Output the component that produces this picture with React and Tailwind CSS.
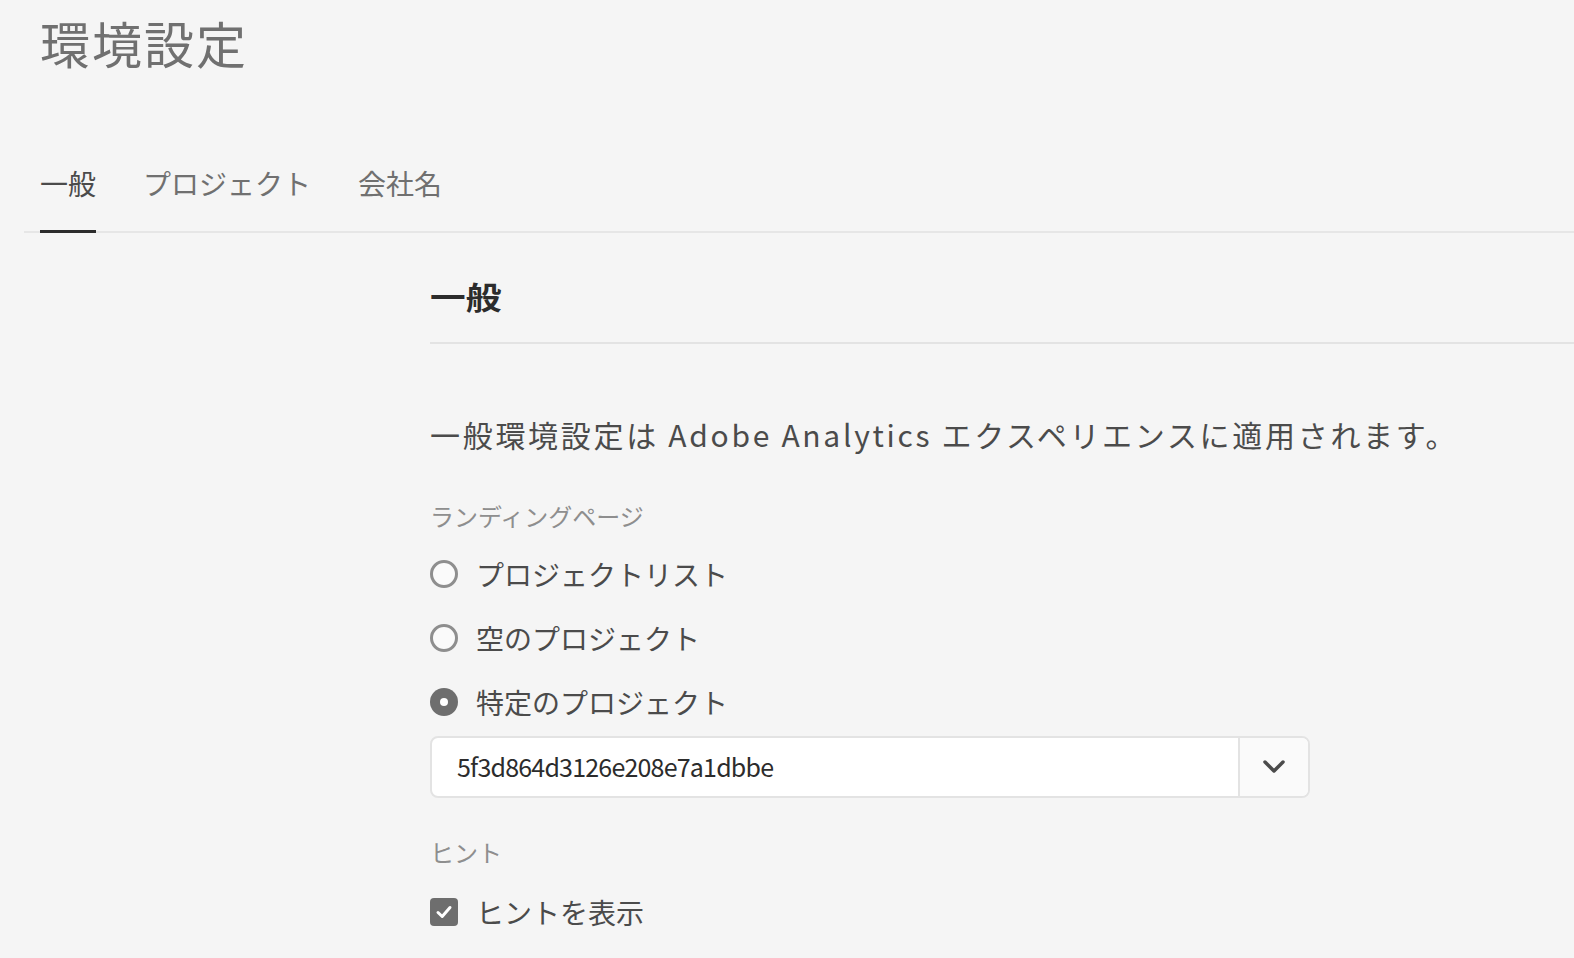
import { useState } from "react";

const font = "font-['Noto_Sans_CJK_JP','Noto_Sans',sans-serif]";

function Radio({ checked, label, onClick }) {
  return (
    <button type="button" onClick={onClick} className="flex h-[64px] items-center gap-[18px] text-left">
      {checked ? (
        <span className="flex size-[28px] items-center justify-center rounded-full bg-[#6e6e6e]">
          <span className="size-[8px] rounded-full bg-white" />
        </span>
      ) : (
        <span className="size-[28px] rounded-full border-[3px] border-[#8e8e8e] bg-[#fafafa]" />
      )}
      <span className="text-[28px] leading-[28px] text-[#4b4b4b]">{label}</span>
    </button>
  );
}

export default function App() {
  const [landing, setLanding] = useState("specific");
  const [tips, setTips] = useState(true);
  const tabs = ["一般", "プロジェクト", "会社名"];

  return (
    <div className={`min-h-screen bg-[#f5f5f5] ${font}`}>
      <h1 className="pl-[40px] pt-[17px] text-[50px] leading-[50px] font-normal tracking-[2px] text-[#707070]">環境設定</h1>

      <div className="ml-[24px] mt-[102px] flex gap-[47px] border-b-2 border-[#e6e6e6] pl-[16px]">
        {tabs.map((t, i) => (
          <div
            key={t}
            className={
              i === 0
                ? "-mb-[2px] border-b-[3px] border-[#2c2c2c] pb-[33px] text-[28px] leading-[28px] text-[#4b4b4b]"
                : "-mb-[2px] border-b-[3px] border-transparent pb-[33px] text-[28px] leading-[28px] text-[#707070]"
            }
          >
            {t}
          </div>
        ))}
      </div>

      <div className="pl-[430px]">
        <h2 className="mt-[48px] border-b-2 border-[#e3e3e3] pb-[31px] text-[31px] leading-[30px] font-bold text-[#2c2c2c]">
          <span className="inline-block origin-left scale-x-[1.15]">一般</span>
        </h2>

        <p className="mt-[76px] text-[30px] leading-[28px] tracking-[2.7px] text-[#4b4b4b]">
          一般環境設定は Adobe Analytics エクスペリエンスに適用されます。
        </p>

        <div className="mt-[56px] text-[24px] leading-[24px] text-[#8e8e8e]">ランディングページ</div>
        <div className="mt-[14px] flex flex-col">
          <Radio label="プロジェクトリスト" checked={landing === "list"} onClick={() => setLanding("list")} />
          <Radio label="空のプロジェクト" checked={landing === "blank"} onClick={() => setLanding("blank")} />
          <Radio label="特定のプロジェクト" checked={landing === "specific"} onClick={() => setLanding("specific")} />
        </div>

        <div className="mt-[2px] flex h-[62px] w-[880px] overflow-hidden rounded-[8px] border-2 border-[#e3e3e3] bg-white">
          <div className="flex flex-1 items-center pl-[25px] text-[25px] tracking-[-0.8px] text-[#2c2c2c]">5f3d864d3126e208e7a1dbbe</div>
          <div className="flex w-[70px] items-center justify-center border-l-2 border-[#e3e3e3] bg-[#fafafa]">
            <svg width="24" height="16" viewBox="0 0 24 16" fill="none">
              <path d="M3 3 L12 12 L21 3" stroke="#4b4b4b" strokeWidth="3.5" strokeLinecap="round" strokeLinejoin="round" />
            </svg>
          </div>
        </div>

        <div className="mt-[42px] text-[24px] leading-[24px] text-[#8e8e8e]">ヒント</div>
        <button type="button" onClick={() => setTips(!tips)} className="mt-[16px] flex h-[64px] items-center gap-[18px]">
          <span className="flex size-[28px] items-center justify-center rounded-[4px] bg-[#6e6e6e]">
            {tips && (
              <svg width="18" height="18" viewBox="0 0 18 18" fill="none">
                <path d="M3 9.5 L7.2 13.5 L15 4.5" stroke="white" strokeWidth="3" strokeLinecap="round" strokeLinejoin="round" />
              </svg>
            )}
          </span>
          <span className="text-[28px] leading-[28px] text-[#4b4b4b]">ヒントを表示</span>
        </button>
      </div>
    </div>
  );
}
